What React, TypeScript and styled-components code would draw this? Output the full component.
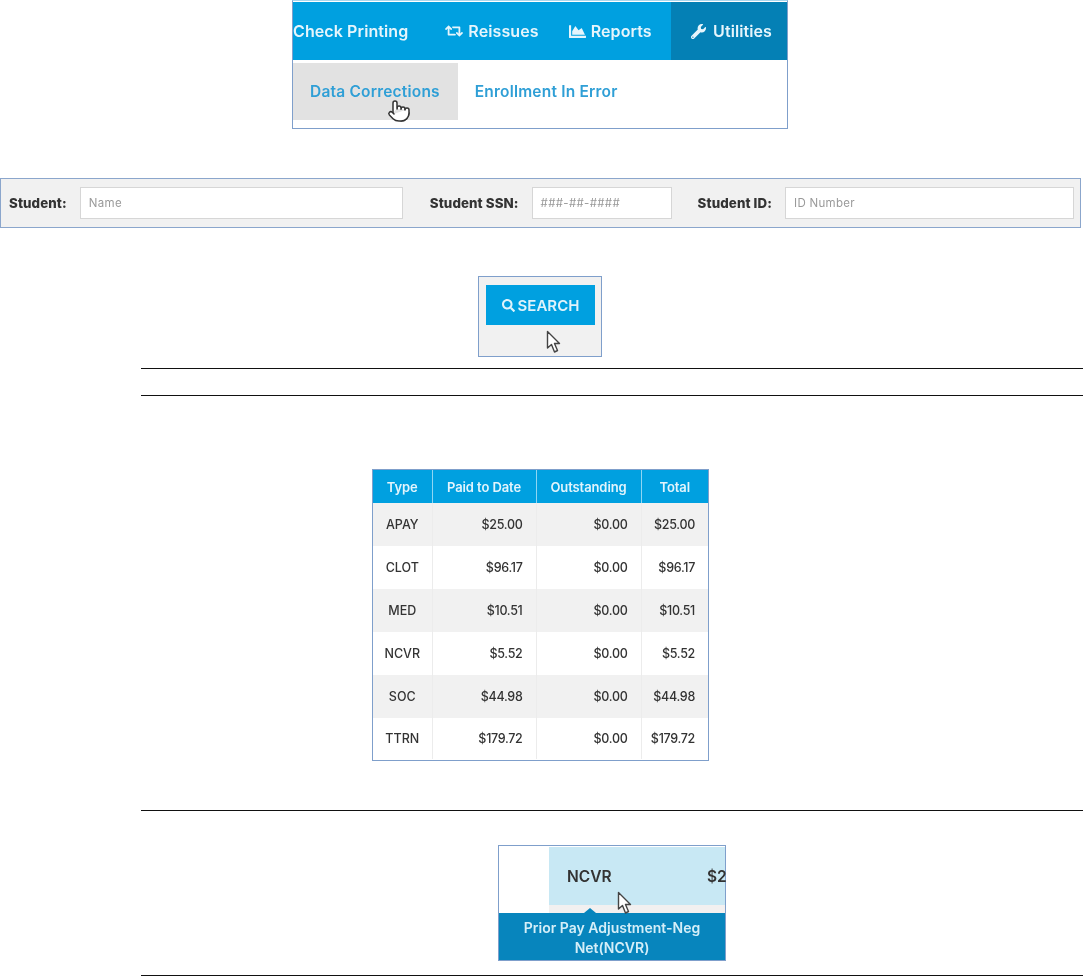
import React from 'react'
import styled, { createGlobalStyle } from 'styled-components'
import { FaChartArea, FaRetweet, FaSearch, FaWrench } from 'react-icons/fa'
import { Pointer } from 'lucide-react'

const rows = [
  { type: 'APAY', paid: '$25.00', outstanding: '$0.00', total: '$25.00' },
  { type: 'CLOT', paid: '$96.17', outstanding: '$0.00', total: '$96.17' },
  { type: 'MED', paid: '$10.51', outstanding: '$0.00', total: '$10.51' },
  { type: 'NCVR', paid: '$5.52', outstanding: '$0.00', total: '$5.52' },
  { type: 'SOC', paid: '$44.98', outstanding: '$0.00', total: '$44.98' },
  { type: 'TTRN', paid: '$179.72', outstanding: '$0.00', total: '$179.72' },
]

function Arrow() {
  return (
    <svg width="15" height="24" viewBox="0 0 15 24">
      <path
        d="M1.5 1.5 L1.5 18 L5.5 14.5 L8.5 22 L11.5 20.5 L8.5 13.5 L13.5 13.5 Z"
        fill="#fff"
        stroke="#444"
        strokeWidth="1.4"
        strokeLinejoin="round"
      />
    </svg>
  )
}

export default function App() {
  return (
    <>
      <GlobalStyle />
      <Page>
        <NavBox>
          <NavBar>
            <NavItem $first>Check Printing</NavItem>
            <NavItem>
              <FaRetweet size={18} />
              Reissues
            </NavItem>
            <NavItem>
              <FaChartArea size={17} />
              Reports
            </NavItem>
            <NavItem $active>
              <FaWrench size={15} />
              Utilities
            </NavItem>
          </NavBar>
          <SubNav>
            <SubItem $hover>
              Data Corrections
              <HandCursor>
                <Pointer size={24} fill="#fff" strokeWidth={1.5} />
              </HandCursor>
            </SubItem>
            <SubItem>Enrollment In Error</SubItem>
          </SubNav>
        </NavBox>

        <SearchForm>
          <FieldLabel>Student:</FieldLabel>
          <FieldInput $width={323} $gap={27}>Name</FieldInput>
          <FieldLabel>Student SSN:</FieldLabel>
          <FieldInput $width={140} $gap={26}>###-##-####</FieldInput>
          <FieldLabel>Student ID:</FieldLabel>
          <FieldInput $width={289} $gap={0}>ID Number</FieldInput>
        </SearchForm>

        <ButtonBox>
          <SearchButton>
            <FaSearch size={13} />
            SEARCH
          </SearchButton>
          <ButtonCursor>
            <Arrow />
          </ButtonCursor>
        </ButtonBox>

        <RuleBlock $top={11}>
          <Rule />
          <Rule $top={26} />
        </RuleBlock>

        <TableBox>
          <Table>
            <colgroup>
              <col width="59" />
              <col width="104" />
              <col width="105" />
              <col width="67" />
            </colgroup>
            <thead>
              <tr>
                <HeadCell>Type</HeadCell>
                <HeadCell>Paid to Date</HeadCell>
                <HeadCell>Outstanding</HeadCell>
                <HeadCell>Total</HeadCell>
              </tr>
            </thead>
            <tbody>
              {rows.map((row) => (
                <BodyRow key={row.type}>
                  <TypeCell>{row.type}</TypeCell>
                  <AmountCell>{row.paid}</AmountCell>
                  <AmountCell>{row.outstanding}</AmountCell>
                  <AmountCell>{row.total}</AmountCell>
                </BodyRow>
              ))}
            </tbody>
          </Table>
        </TableBox>

        <RuleBlock $top={49}>
          <Rule />
        </RuleBlock>

        <TooltipArea>
          <TooltipBox>
            <HoverRow>
              <HoverLabel>NCVR</HoverLabel>
              <HoverAmount>$2</HoverAmount>
            </HoverRow>
            <Tooltip>
              Prior Pay Adjustment-Neg
              <br />
              Net(NCVR)
            </Tooltip>
            <TooltipCursor>
              <Arrow />
            </TooltipCursor>
          </TooltipBox>
        </TooltipArea>

        <RuleBlock $top={14}>
          <Rule />
        </RuleBlock>
      </Page>
    </>
  )
}

const GlobalStyle = createGlobalStyle`
  html, body {
    margin: 0;
    padding: 0;
    background: #fff;
  }

  body {
    font-family: Inter, "Open Sans", "Liberation Sans", sans-serif;
    color: #333;
  }
`

const Page = styled.div`
  display: flex;
  flex-direction: column;
  width: 1083px;
  height: 976px;
  overflow: hidden;
`

const NavBox = styled.div`
  align-self: flex-start;
  margin-left: 292px;
  width: 496px;
  height: 129px;
  box-sizing: border-box;
  background: #fff;
  border: 1px solid #7f9fcb;
  border-top-color: #a9d6ee;
  padding-top: 1px;
  filter: blur(0.5px);
`

const NavBar = styled.div`
  display: flex;
  height: 58px;
  background: #00a0e0;
`

const NavItem = styled.div<{ $first?: boolean; $active?: boolean }>`
  display: flex;
  align-items: center;
  gap: ${({ $active }) => ($active ? '7px' : '5px')};
  padding: 0 ${({ $first, $active }) => ($first ? '20px' : $active ? '15px' : '13px')} 0 ${({ $first, $active }) => ($first ? '0' : $active ? '20px' : '17px')};
  margin-left: ${({ $active }) => ($active ? 'auto' : '0')};
  background: ${({ $active }) => ($active ? '#0480b5' : 'transparent')};
  color: #e6f5fc;
  font-size: 16px;
  font-weight: 600;
  letter-spacing: 0.1px;
  white-space: nowrap;
`

const SubNav = styled.div`
  display: flex;
  margin-top: 3px;
  height: 57px;
`

const SubItem = styled.div<{ $hover?: boolean }>`
  position: relative;
  display: flex;
  align-items: center;
  padding: 0 ${({ $hover }) => ($hover ? '18px' : '17px')} 0 17px;
  background: ${({ $hover }) => ($hover ? '#e2e2e2' : 'transparent')};
  color: #2f9fd6;
  font-size: 15.5px;
  font-weight: 600;
  letter-spacing: 0.2px;
  white-space: nowrap;
`

const HandCursor = styled.span`
  position: absolute;
  left: 94px;
  top: 36px;
  display: flex;
  color: #333;
`

const SearchForm = styled.div`
  display: flex;
  align-items: center;
  margin-top: 49px;
  width: 1081px;
  height: 50px;
  box-sizing: border-box;
  padding-left: 8px;
  background: #f1f1f1;
  border: 1px solid #8ba6cc;
  filter: blur(0.5px);
`

const FieldLabel = styled.label`
  flex: 0 0 auto;
  margin-right: 13px;
  color: #333;
  font-size: 13.3px;
  font-weight: 800;
  letter-spacing: 0.1px;
  white-space: nowrap;
`

const FieldInput = styled.div<{ $width: number; $gap: number }>`
  display: flex;
  align-items: center;
  flex-shrink: 0;
  width: ${({ $width }) => $width}px;
  height: 32px;
  box-sizing: border-box;
  margin-right: ${({ $gap }) => $gap}px;
  padding-left: 8px;
  background: #fff;
  border: 1px solid #d6d6d6;
  color: #9a9a9a;
  font-size: 11.5px;
  letter-spacing: 0.3px;
`

const ButtonBox = styled.div`
  position: relative;
  align-self: flex-start;
  margin: 48px 0 0 478px;
  width: 124px;
  height: 81px;
  box-sizing: border-box;
  padding: 8px 0 0 7px;
  background: #f1f1f1;
  border: 1px solid #7f9fcb;
  filter: blur(0.4px);
`

const SearchButton = styled.div`
  display: flex;
  align-items: center;
  justify-content: center;
  gap: 3px;
  width: 109px;
  height: 40px;
  background: #00a0e0;
  color: #dff3fb;
  font-size: 15px;
  font-weight: 600;
`

const ButtonCursor = styled.span`
  position: absolute;
  left: 67px;
  top: 53px;
`

const RuleBlock = styled.div<{ $top: number }>`
  margin: ${({ $top }) => $top}px 0 0 141px;
`

const Rule = styled.div<{ $top?: number }>`
  height: 1px;
  margin-top: ${({ $top }) => $top ?? 0}px;
  background: #111;
`

const TableBox = styled.div`
  align-self: flex-start;
  margin: 73px 0 0 372px;
  width: 337px;
  height: 292px;
  box-sizing: border-box;
  border: 1px solid #7f9fcb;
  overflow: hidden;
  filter: blur(0.5px);
`

const Table = styled.table`
  width: 335px;
  table-layout: fixed;
  border-collapse: collapse;
`

const HeadCell = styled.th`
  height: 33px;
  padding: 0;
  background: #00a0e0;
  border-left: 1px solid #8fd6f3;
  color: #e2f4fc;
  font-size: 13px;
  font-weight: 600;
  letter-spacing: -0.1px;
  text-align: center;

  &:first-child {
    border-left: 0;
  }
`

const BodyRow = styled.tr`
  height: 43px;

  &:nth-child(odd) {
    background: #f1f1f1;
  }

  &:last-child {
    height: 41px;
  }
`

const TypeCell = styled.td`
  padding: 0;
  color: #333;
  font-size: 12.5px;
  font-weight: 500;
  text-align: center;
`

const AmountCell = styled.td`
  padding: 0 13px 0 0;
  border-left: 1px solid #ececec;
  color: #333;
  font-size: 12.5px;
  font-weight: 500;
  letter-spacing: -0.3px;
  text-align: right;
`

const TooltipArea = styled.div`
  display: flex;
  justify-content: center;
  margin: 34px 0 0 141px;
`

const TooltipBox = styled.div`
  position: relative;
  width: 228px;
  height: 116px;
  box-sizing: border-box;
  padding-top: 1px;
  background: #fff;
  border: 1px solid #7f9fcb;
  filter: blur(0.5px);
`

const HoverRow = styled.div`
  display: flex;
  align-items: center;
  box-sizing: border-box;
  margin-left: 50px;
  padding-left: 18px;
  height: 66px;
  background: #c8e8f4;
  border-bottom: 8px solid #f2f0f0;
  color: #333;
  font-size: 15.5px;
  font-weight: 600;
  white-space: nowrap;
`

const HoverLabel = styled.span`
  flex: 0 0 140px;
`

const HoverAmount = styled.span`
  flex-shrink: 0;
`

const Tooltip = styled.div`
  position: relative;
  box-sizing: border-box;
  height: 47px;
  padding-top: 5px;
  background: #0785bd;
  color: #d4eef8;
  font-size: 14px;
  font-weight: 600;
  line-height: 20px;
  text-align: center;

  &::before {
    content: '';
    position: absolute;
    left: 85px;
    top: -5px;
    border-left: 6px solid transparent;
    border-right: 6px solid transparent;
    border-bottom: 5px solid #0785bd;
  }
`

const TooltipCursor = styled.span`
  position: absolute;
  left: 118px;
  top: 45px;
`
